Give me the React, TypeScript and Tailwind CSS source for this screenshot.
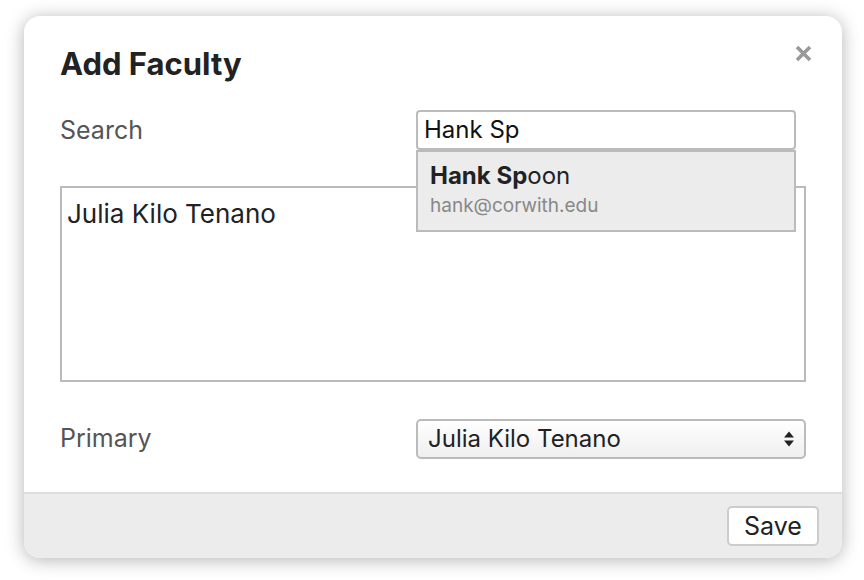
import React from "react";

export default function App() {
  const font = { fontFamily: "Inter, 'Noto Sans', sans-serif" };
  return (
    <div className="w-[864px] h-[580px] bg-white overflow-hidden" style={font}>
      <div className="ml-[24px] mt-[16px] w-[818px] h-[542px] rounded-[16px] bg-white shadow-[0_2px_18px_rgba(0,0,0,0.3)] flex flex-col overflow-visible">
        <div className="relative flex-1 px-[36px] pt-[26px]">
          <button className="absolute right-[30px] top-[29px] leading-none">
            <svg width="17" height="17" viewBox="0 0 17 17">
              <path d="M2 2 L15 15 M15 2 L2 15" stroke="#999" strokeWidth="3.6" strokeLinecap="butt" />
            </svg>
          </button>
          <h1 className="text-[31px] font-bold text-[#222] leading-[44px]">Add Faculty</h1>
          <div className="mt-[24px] flex items-start">
            <div className="w-[356px] text-[25px] text-[#555] leading-[40px]">Search</div>
            <div className="relative w-[380px]">
              <div className="h-[40px] border-2 border-[#bbb] rounded-[4px] bg-white px-[6px] flex items-center text-[24px] text-[#111]">Hank Sp</div>
              <div className="absolute left-0 right-0 top-[40px] z-10 h-[82px] bg-[#ececec] border-2 border-[#bbb] px-[12px] pt-[8px]">
                <div className="text-[24px] text-[#222] leading-[32px]"><span className="font-bold">Hank Sp</span>oon</div>
                <div className="text-[19px] text-[#888] leading-[28px]">hank@corwith.edu</div>
              </div>
            </div>
          </div>
          <div className="mt-[36px] h-[196px] w-[746px] border-2 border-[#bbb] px-[5px] pt-[10px]">
            <div className="text-[26px] text-[#222] leading-[32px]">Julia Kilo Tenano</div>
          </div>
          <div className="mt-[37px] flex items-center">
            <div className="w-[356px] text-[25px] text-[#555]">Primary</div>
            <div className="w-[390px] h-[40px] border-2 border-[#bbb] rounded-[5px] bg-gradient-to-b from-white to-[#efefef] flex items-center justify-between pl-[10px] pr-[9px] text-[24px] text-[#222]">
              <span>Julia Kilo Tenano</span>
              <svg width="12" height="18" viewBox="0 0 12 18">
                <path d="M6 1.5 L11 7.5 H1 Z" fill="#222" />
                <path d="M6 16.5 L11 10.5 H1 Z" fill="#222" />
              </svg>
            </div>
          </div>
        </div>
        <div className="h-[66px] border-t-2 border-[#ddd] bg-[#ececec] rounded-b-[16px] flex items-center justify-end pr-[23px]">
          <button className="h-[40px] w-[92px] bg-white border-2 border-[#ccc] rounded-[5px] text-[25px] text-[#222]">Save</button>
        </div>
      </div>
    </div>
  );
}
